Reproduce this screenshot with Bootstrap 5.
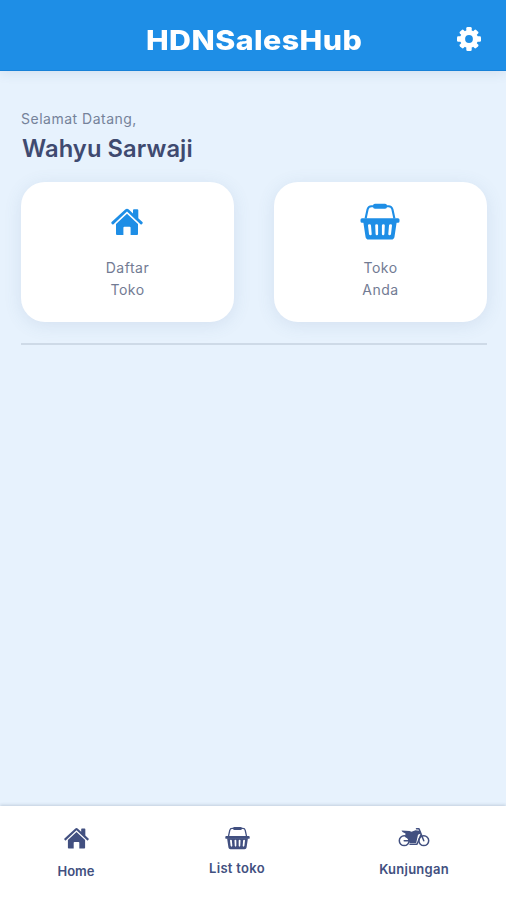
<!DOCTYPE html>
<html lang="id">
<head>
<meta charset="utf-8">
<meta name="viewport" content="width=device-width, initial-scale=1">
<title>HDNSalesHub</title>
<link href="https://cdn.jsdelivr.net/npm/bootstrap@5.3.0/dist/css/bootstrap.min.css" rel="stylesheet">
<style>
body{font-family:Inter,"Noto Sans",sans-serif;background:#e7f2fd;color:#3f4a70;height:900px;overflow:hidden}
svg{display:block;fill:currentColor}
.app-bar{height:71px;background:#1e8ee6;border-bottom:1px solid #1781d8;box-shadow:0 1px 12px rgba(60,100,140,.14);padding:6px 25px 0;display:grid;grid-template-columns:24px 1fr 24px}
.brand-name{font-size:27px;line-height:40px;font-weight:800;letter-spacing:.4px;padding:6px 0 0 2px;transform:scaleX(1.125)}
.gear-btn{width:24px;height:24px;margin-top:1px}
.content-area{padding:38px 19px 0 21px}
.welcome{font-size:14px;line-height:20px;letter-spacing:.5px;color:#75829a}
.user-name{font-size:23.7px;line-height:30px;font-weight:600;letter-spacing:.1px;padding-left:1px;margin:5px 0 18px}
.tiles{gap:40px}
.tile{height:140px;border-radius:24px;box-shadow:0 3px 18px rgba(70,110,150,.12);padding-top:20px}
.tile-icon{height:38px;color:#1e8ee6;padding-right:1px}
.tile-text{font-size:14px;line-height:22px;letter-spacing:.5px;color:#727b93;padding-top:17px}
.divider{height:2px;background:#cedae7;margin:21px 0 0}
.tabs-bar{height:94px;box-shadow:0 -1px 3px rgba(60,80,110,.22);color:#425080;font-size:13px;line-height:18px;font-weight:600}
.tab-home{width:152px}.tab-list{width:170px}.tab-visit{width:184px}
.tab-home span{margin-top:12px}.tab-list span{margin-top:9px}.tab-visit span{margin-top:12px;letter-spacing:.25px}
.tab-list span{letter-spacing:.3px}
</style>
<script src="https://cdn.jsdelivr.net/npm/bootstrap@5.3.0/dist/js/bootstrap.bundle.min.js"></script>
</head>
<body class="d-flex flex-column m-0">
<svg class="d-none">
<symbol id="house" viewBox="0 0 32 27"><path d="M.6 14.1 14.2 1.5q1.8-1.7 3.6 0L22 5.4V2.3q0-1 1-1h3.3q1 0 1 1v8l4.1 3.800q.7.7.1 1.400l-.7.8q-.6.6-1.300 0L16 3.600 2.500 16.300q-.7.6-1.300 0l-.7-.8q-.6-.7.1-1.400Z"/><path d="M5 15.900 16 5.700l11 10.200V26q0 1-1 1h-6.400v-7.300q0-1-1-1h-5.200q-1 0-1 1V27H6q-1 0-1-1Z"/></symbol>
<symbol id="basket" viewBox="0 0 40 37"><path d="M5.600 15.500 7.600 6.300Q8.400 3.200 11.500 3.200h17q3.100 0 3.900 3.100L34.400 15.500" fill="none" stroke="currentColor" stroke-width="2.100"/><rect x="13" y="0.700" width="14" height="5" rx="2"/><path d="M2 15.200h36q1.500 0 1.500 1.500v1.600q0 1.500-1.500 1.500H2q-1.500 0-1.500-1.500v-1.600q0-1.500 1.500-1.500Z"/><path fill-rule="evenodd" d="M3.300 19h33.400l-2.200 14.700q-.4 2.800-3.200 2.800H8.700q-2.800 0-3.200-2.800ZM8 22.500l1 8.500q.2 1.300 1.500 1.300t1.200-1.300L11 22.500q-.1-1.200-1.600-1.200T8 22.500Zm7.200 0 .4 8.500q.1 1.300 1.300 1.300t1.200-1.300v-8.500q0-1.200-1.500-1.200t-1.400 1.200Zm6.700 0V31q0 1.300 1.200 1.300t1.300-1.300l.4-8.500q0-1.200-1.400-1.200t-1.500 1.200Zm7.100 0-.7 8.500q-.1 1.300 1.200 1.300T31 31l1-8.500q.1-1.200-1.400-1.200T29 22.500Z"/></symbol>
</svg>
<header class="app-bar align-items-center text-white flex-shrink-0">
<span></span>
<div class="brand-name text-center text-nowrap">HDNSalesHub</div>
<svg class="gear-btn" viewBox="-12 -12 24 24"><defs><mask id="hub"><rect x="-12" y="-12" width="24" height="24" fill="#fff"/><circle r="3.9" fill="#000"/></mask></defs><g mask="url(#hub)"><circle r="9"/><g id="teeth"><rect x="-2.700" y="-12" width="5.400" height="24" rx="1.300"/><rect x="-12" y="-2.700" width="24" height="5.400" rx="1.300"/></g><use href="#teeth" transform="rotate(45) scale(.96)"/></g></svg>
</header>
<main class="content-area flex-grow-1">
<div class="welcome">Selamat Datang,</div>
<h1 class="user-name">Wahyu Sarwaji</h1>
<div class="tiles d-flex">
<div class="tile bg-white flex-fill w-50 text-center">
<div class="tile-icon d-flex justify-content-center align-items-center"><svg width="32" height="27"><use href="#house"/></svg></div>
<div class="tile-text">Daftar<br>Toko</div>
</div>
<div class="tile bg-white flex-fill w-50 text-center">
<div class="tile-icon d-flex justify-content-center align-items-center"><svg width="40" height="37"><use href="#basket"/></svg></div>
<div class="tile-text">Toko<br>Anda</div>
</div>
</div>
<div class="divider"></div>
</main>
<nav class="tabs-bar bg-white d-flex flex-shrink-0 pt-3">
<div class="tab-home d-flex flex-column align-items-center pt-1"><svg width="25" height="24"><use href="#house"/></svg><span>Home</span></div>
<div class="tab-list d-flex flex-column align-items-center pt-1"><svg width="25" height="24"><use href="#basket"/></svg><span>List toko</span></div>
<div class="tab-visit d-flex flex-column align-items-center pt-1"><svg width="32" height="22" viewBox="0 0 32 22"><g fill="none" stroke="currentColor" stroke-width="1.500" stroke-linecap="round" stroke-linejoin="round"><circle cx="6.200" cy="14.700" r="4.900"/><circle cx="25.800" cy="14.700" r="4.900"/><path d="M18.500 2.700H21L25.800 14.700M6.200 14.700h6M12 18.300h7L23 8.500"/></g><path d="M3.500 4.500 11.500 5l2 .8 4-1.500 4.300.4 1.500 2.500-3.300 1.500-1.800 8.300h-6.500l-2.200-4.500-2.500-1.500.5-3.500-3-1.500Z"/></svg><span>Kunjungan</span></div>
</nav>
</body>
</html>
